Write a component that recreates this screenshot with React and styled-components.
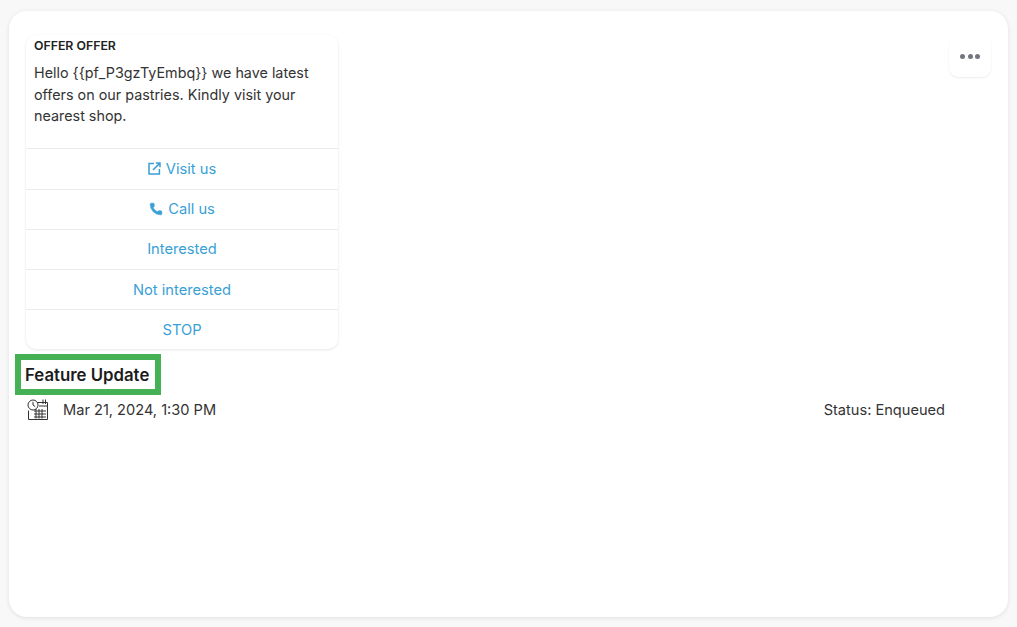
import React from 'react';
import styled, { createGlobalStyle } from 'styled-components';
import { Phone } from 'lucide-react';

const GlobalStyle = createGlobalStyle`
  html, body {
    margin: 0;
    padding: 0;
    height: 100%;
    background: #f8f8f8;
    font-family: Inter, "Noto Sans", "Liberation Sans", sans-serif;
    overflow: hidden;
  }
`;

const Page = styled.div`
  box-sizing: border-box;
  width: 1017px;
  height: 627px;
  padding: 11px 9px 10px;
`;

const Card = styled.div`
  box-sizing: border-box;
  height: 606px;
  padding: 24px 17px 0 6px;
  background: #fff;
  border-radius: 18px;
  box-shadow: 0 1px 4px rgba(0, 0, 0, 0.1);
`;

const TopRow = styled.div`
  display: flex;
  justify-content: space-between;
  align-items: flex-start;
  padding-left: 11px;
`;

const Bubble = styled.div`
  width: 312px;
  background: #fff;
  border-radius: 10px;
  box-shadow: 0 1px 3px rgba(0, 0, 0, 0.1);
`;

const BubbleBody = styled.div`
  box-sizing: border-box;
  height: 113.4px;
  padding: 3px 8px 0;
`;

const Heading = styled.div`
  font-size: 12.3px;
  font-weight: 600;
  line-height: 16px;
  color: #222;
  margin-bottom: 8px;
`;

const Message = styled.div`
  font-size: 14.35px;
  line-height: 21.6px;
  color: #333;
`;

const Action = styled.div`
  display: flex;
  justify-content: center;
  align-items: center;
  gap: 5px;
  height: 39.2px;
  border-top: 1px solid #e9ecef;
  font-size: 14.7px;
  color: #3a9fd6;
`;

const MenuButton = styled.div`
  display: flex;
  justify-content: center;
  align-items: center;
  gap: 2.5px;
  width: 42px;
  height: 42px;
  border-radius: 9px;
  background: #fff;
  box-shadow: 0 1px 2px rgba(0, 0, 0, 0.08);
`;

const Dot = styled.span`
  width: 5px;
  height: 5px;
  border-radius: 50%;
  background: #73767f;
`;

const TitleBox = styled.div`
  display: inline-block;
  margin-top: 4.5px;
  padding: 5px 6px 4px 4px;
  border: 6px solid #46b154;
  font-size: 16.8px;
  font-weight: 600;
  line-height: 20px;
  color: #1c1c1c;
`;

const MetaRow = styled.div`
  display: flex;
  align-items: center;
  height: 20px;
  margin-top: 5px;
  padding: 0 46px 0 12px;
  font-size: 14.6px;
  color: #333;
`;

const DateText = styled.span`
  margin-left: 15px;
`;

const StatusText = styled.span`
  margin-left: auto;
`;

function ExternalIcon() {
  return (
    <svg width="13" height="13" viewBox="0 0 13 13" fill="none" stroke="#3a9fd6" strokeWidth="1.5">
      <path d="M6 1.6H1v10.4h10.4V7" />
      <path d="M5 8 11.6 1.4M7.8 1h4.2v4.2" />
    </svg>
  );
}

function ScheduleIcon() {
  return (
    <svg width="21" height="21" viewBox="0 0 21 21" fill="none" stroke="#333" strokeWidth="1" style={{ flexShrink: 0 }}>
      <path d="M7 3.5h13.5v17H1.5v-9" />
      <path d="M16 0.5v4.5M18.5 0.5v4.5M12 7h8.5" />
      <circle cx="6" cy="6" r="5" fill="#fff" />
      <path d="M6 2.8V6l2.2 1.6" />
      <path d="M7 12h12M7 15h12M7 18h12M9 10v9.5M12 10v9.5M15 10v9.5" />
    </svg>
  );
}

const message = 'Hello {{pf_P3gzTyEmbq}} we have latest offers on our pastries. Kindly visit your nearest shop.';

export default function App() {
  return (
    <Page>
      <GlobalStyle />
      <Card>
        <TopRow>
          <Bubble>
            <BubbleBody>
              <Heading>OFFER OFFER</Heading>
              <Message>{message}</Message>
            </BubbleBody>
            <Action><ExternalIcon />Visit us</Action>
            <Action><Phone size={14} fill="#3a9fd6" strokeWidth={1} />Call us</Action>
            <Action>Interested</Action>
            <Action>Not interested</Action>
            <Action>STOP</Action>
          </Bubble>
          <MenuButton>
            <Dot /><Dot /><Dot />
          </MenuButton>
        </TopRow>
        <TitleBox>Feature Update</TitleBox>
        <MetaRow>
          <ScheduleIcon />
          <DateText>Mar 21, 2024, 1:30 PM</DateText>
          <StatusText>Status: Enqueued</StatusText>
        </MetaRow>
      </Card>
    </Page>
  );
}
